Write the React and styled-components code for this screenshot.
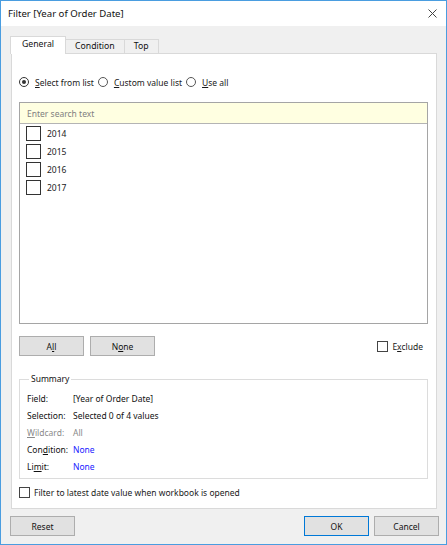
import React from 'react';
import styled, { createGlobalStyle } from 'styled-components';

const GlobalStyle = createGlobalStyle`
  html, body {
    margin: 0;
    padding: 0;
    background: #ffffff;
  }
  body {
    font-family: "Noto Sans", "Liberation Sans", sans-serif;
    font-size: 8.5px;
    color: #1a1a1a;
  }
  * {
    box-sizing: border-box;
  }
`;

const Window = styled.div`
  width: 447px;
  height: 545px;
  border: 1px solid #4a9de0;
  background: #f0f0f0;
  display: flex;
  flex-direction: column;
`;

const TitleBar = styled.div`
  height: 25px;
  flex: none;
  background: #ffffff;
  display: flex;
  align-items: center;
  justify-content: space-between;
  padding: 0 9px 0 7px;
`;

const Title = styled.span`
  font-size: 9.6px;
  color: #111;
`;

const Body = styled.div`
  flex: 1;
  display: flex;
  flex-direction: column;
  padding: 10px 9px 0 10px;
`;

const TabRow = styled.div`
  display: flex;
  align-items: flex-end;
  height: 18px;
  margin-bottom: -1px;
  position: relative;
  z-index: 1;
`;

const Tab = styled.div`
  height: ${p => (p.$active ? '18px' : '15px')};
  padding: 0 ${p => (p.$active ? '11px' : '9px')};
  margin-left: ${p => (p.$active ? '-1px' : '0')};
  background: ${p => (p.$active ? '#ffffff' : '#f0f0f0')};
  border: 1px solid #d9d9d9;
  border-bottom: ${p => (p.$active ? 'none' : '1px solid #d9d9d9')};
  border-left: ${p => (p.$active ? '1px solid #d9d9d9' : 'none')};
  display: flex;
  align-items: center;
  padding-bottom: ${p => (p.$active ? '3px' : '1px')};
  font-size: 8.7px;
  color: #111;
`;

const Panel = styled.div`
  background: #ffffff;
  border: 1px solid #d9d9d9;
  height: 456px;
  display: flex;
  flex-direction: column;
  padding: 20px 8px 9px 7px;
`;

const RadioRow = styled.div`
  height: 16px;
  display: flex;
  align-items: center;
  gap: 4px;
  margin-bottom: 12px;
`;

const RadioItem = styled.label`
  display: flex;
  align-items: center;
  gap: 6px;
`;

const RadioCircle = styled.span`
  width: 10px;
  height: 10px;
  border-radius: 50%;
  border: 1px solid ${p => (p.$checked ? '#333' : '#555')};
  display: flex;
  align-items: center;
  justify-content: center;
  &::after {
    content: '';
    display: ${p => (p.$checked ? 'block' : 'none')};
    width: 4px;
    height: 4px;
    border-radius: 50%;
    background: #333;
  }
`;

const Key = styled.span`
  text-decoration: underline;
  text-underline-offset: 1px;
`;

const ListBox = styled.div`
  height: 222px;
  border: 1px solid #a5a5a5;
  display: flex;
  flex-direction: column;
`;

const SearchField = styled.div`
  height: 21px;
  background: #ffffe1;
  border-bottom: 1px solid #b4b4b4;
  display: flex;
  align-items: center;
  padding-left: 7px;
  color: #808080;
`;

const ListItem = styled.div`
  height: 18px;
  display: flex;
  align-items: center;
  gap: 6px;
  padding-left: 6px;
  color: #222;
`;

const BigCheck = styled.span`
  width: 15px;
  height: 15px;
  border: 1px solid #333;
  background: #fff;
`;

const ButtonRow = styled.div`
  height: 20px;
  margin-top: 12px;
  display: flex;
  align-items: center;
  gap: 6px;
  padding-right: 5px;
`;

const Button = styled.div`
  width: 65px;
  height: 20px;
  background: #e1e1e1;
  border: 1px solid ${p => (p.$primary ? '#0078d7' : '#adadad')};
  display: flex;
  align-items: center;
  justify-content: center;
  color: #111;
`;

const Spacer = styled.div`
  flex: 1;
`;

const CheckLabel = styled.label`
  display: flex;
  align-items: center;
  gap: 4px;
`;

const SmallCheck = styled.span`
  width: 11px;
  height: 11px;
  border: 1px solid #444;
  background: #fff;
`;

const Summary = styled.fieldset`
  margin: 17px 0 0 0;
  height: 106px;
  border: 1px solid #dcdcdc;
  padding: 5px 7px 4px 7px;
  min-width: 0;
`;

const Legend = styled.legend`
  margin-left: 2px;
  padding: 0 2px;
  line-height: 12px;
  color: #111;
`;

const SummaryRow = styled.div`
  height: 17px;
  display: grid;
  grid-template-columns: 46px 1fr;
  align-items: center;
  color: ${p => (p.$disabled ? '#8a8a8a' : '#111')};
`;

const Value = styled.span`
  color: ${p => (p.$link ? '#1a1aff' : 'inherit')};
`;

const LatestRow = styled.div`
  height: 14px;
  margin-top: 6px;
  display: flex;
  align-items: center;
`;

const Footer = styled.div`
  display: flex;
  align-items: center;
  gap: 5px;
  padding: 7px 0 8px 0;
  margin: 0 -2px 0 -1px;
`;

const CloseIcon = () => (
  <svg width="9" height="9" viewBox="0 0 9 9">
    <path d="M0.5 0.5 L8.5 8.5 M8.5 0.5 L0.5 8.5" stroke="#444" strokeWidth="1" fill="none" />
  </svg>
);

const years = ['2014', '2015', '2016', '2017'];

const summary = [
  { label: <>Field:</>, value: '[Year of Order Date]' },
  { label: <>Selection:</>, value: 'Selected 0 of 4 values' },
  { label: <><Key>W</Key>ildcard:</>, value: 'All', disabled: true },
  { label: <>Con<Key>d</Key>ition:</>, value: 'None', link: true },
  { label: <>Li<Key>m</Key>it:</>, value: 'None', link: true },
];

export default function App() {
  return (
    <>
      <GlobalStyle />
      <Window>
        <TitleBar>
          <Title>Filter [Year of Order Date]</Title>
          <CloseIcon />
        </TitleBar>
        <Body>
          <TabRow>
            <Tab $active>General</Tab>
            <Tab>Condition</Tab>
            <Tab>Top</Tab>
          </TabRow>
          <Panel>
            <RadioRow>
              <RadioItem>
                <RadioCircle $checked />
                <span><Key>S</Key>elect from list</span>
              </RadioItem>
              <RadioItem>
                <RadioCircle />
                <span><Key>C</Key>ustom value list</span>
              </RadioItem>
              <RadioItem>
                <RadioCircle />
                <span><Key>U</Key>se all</span>
              </RadioItem>
            </RadioRow>
            <ListBox>
              <SearchField>Enter search text</SearchField>
              {years.map(y => (
                <ListItem key={y}>
                  <BigCheck />
                  <span>{y}</span>
                </ListItem>
              ))}
            </ListBox>
            <ButtonRow>
              <Button>A<Key>l</Key>l</Button>
              <Button>N<Key>o</Key>ne</Button>
              <Spacer />
              <CheckLabel>
                <SmallCheck />
                <span>E<Key>x</Key>clude</span>
              </CheckLabel>
            </ButtonRow>
            <Summary>
              <Legend>Summary</Legend>
              {summary.map((row, i) => (
                <SummaryRow key={i} $disabled={row.disabled}>
                  <span>{row.label}</span>
                  <Value $link={row.link}>{row.value}</Value>
                </SummaryRow>
              ))}
            </Summary>
            <LatestRow>
              <CheckLabel>
                <SmallCheck />
                <span>Filter to latest date value when workbook is opened</span>
              </CheckLabel>
            </LatestRow>
          </Panel>
          <Footer>
            <Button>Reset</Button>
            <Spacer />
            <Button $primary>OK</Button>
            <Button>Cancel</Button>
          </Footer>
        </Body>
      </Window>
    </>
  );
}
